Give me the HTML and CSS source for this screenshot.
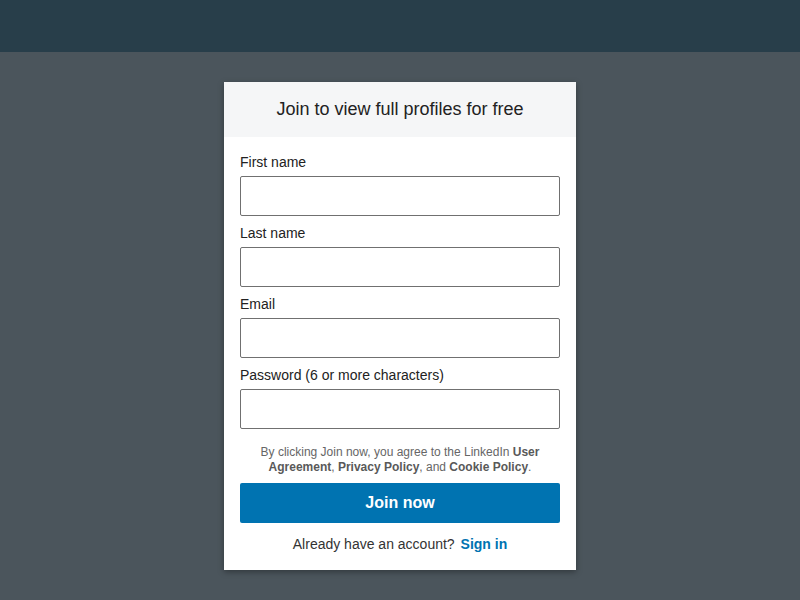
FILE: index.html
```html
<!DOCTYPE html>
<html>
<head>
<meta charset="utf-8">
<link rel="stylesheet" href="styles.css">
</head>
<body>
<header class="topbar"></header>
<main class="overlay">
  <section class="card">
    <h1 class="card-title">Join to view full profiles for free</h1>
    <form class="form">
      <label class="label">First name</label>
      <input class="input" type="text">
      <label class="label">Last name</label>
      <input class="input" type="text">
      <label class="label">Email</label>
      <input class="input" type="email">
      <label class="label">Password (6 or more characters)</label>
      <input class="input" type="password">
      <p class="legal">By clicking Join now, you agree to the LinkedIn <b>User Agreement</b>, <b>Privacy Policy</b>, and <b>Cookie Policy</b>.</p>
      <button class="btn" type="button">Join now</button>
      <p class="signin">Already have an account? <a class="signin-link">Sign in</a></p>
    </form>
  </section>
</main>
</body>
</html>
```
FILE: styles.css
```css
html, body {
  margin: 0;
  padding: 0;
  height: 100%;
}
body {
  font-family: "Liberation Sans", Arial, sans-serif;
  background: #4b555c;
  overflow: hidden;
}
.topbar {
  height: 52px;
  background: #283e4a;
}
.overlay {
  display: flex;
  justify-content: center;
  padding-top: 30px;
}
.card {
  width: 352px;
  background: #fff;
  box-shadow: 0 2px 6px rgba(0,0,0,0.35);
}
.card-title {
  margin: 0;
  height: 55px;
  background: #f5f6f7;
  font-size: 18px;
  font-weight: normal;
  color: #222;
  display: flex;
  align-items: center;
  justify-content: center;
}
.form {
  display: flex;
  flex-direction: column;
  padding: 15px 16px 17px;
}
.label {
  font-size: 14px;
  line-height: 20px;
  color: #222;
  margin-bottom: 4px;
}
.input {
  box-sizing: border-box;
  height: 40px;
  border: 1px solid #707070;
  border-radius: 2px;
  margin: 0 0 7px;
  padding: 0 8px;
  font: inherit;
}
.legal {
  margin: 9px 8px 8px;
  font-size: 12px;
  line-height: 15px;
  color: #666;
  text-align: center;
}
.legal b {
  color: #595959;
}
.btn {
  height: 40px;
  border: none;
  border-radius: 2px;
  background: #0073b1;
  color: #fff;
  font: bold 16px "Liberation Sans", Arial, sans-serif;
}
.signin {
  margin: 12px 0 0;
  font-size: 14px;
  line-height: 18px;
  color: #333;
  text-align: center;
}
.signin-link {
  color: #0073b1;
  font-weight: bold;
  margin-left: 2px;
}
```
